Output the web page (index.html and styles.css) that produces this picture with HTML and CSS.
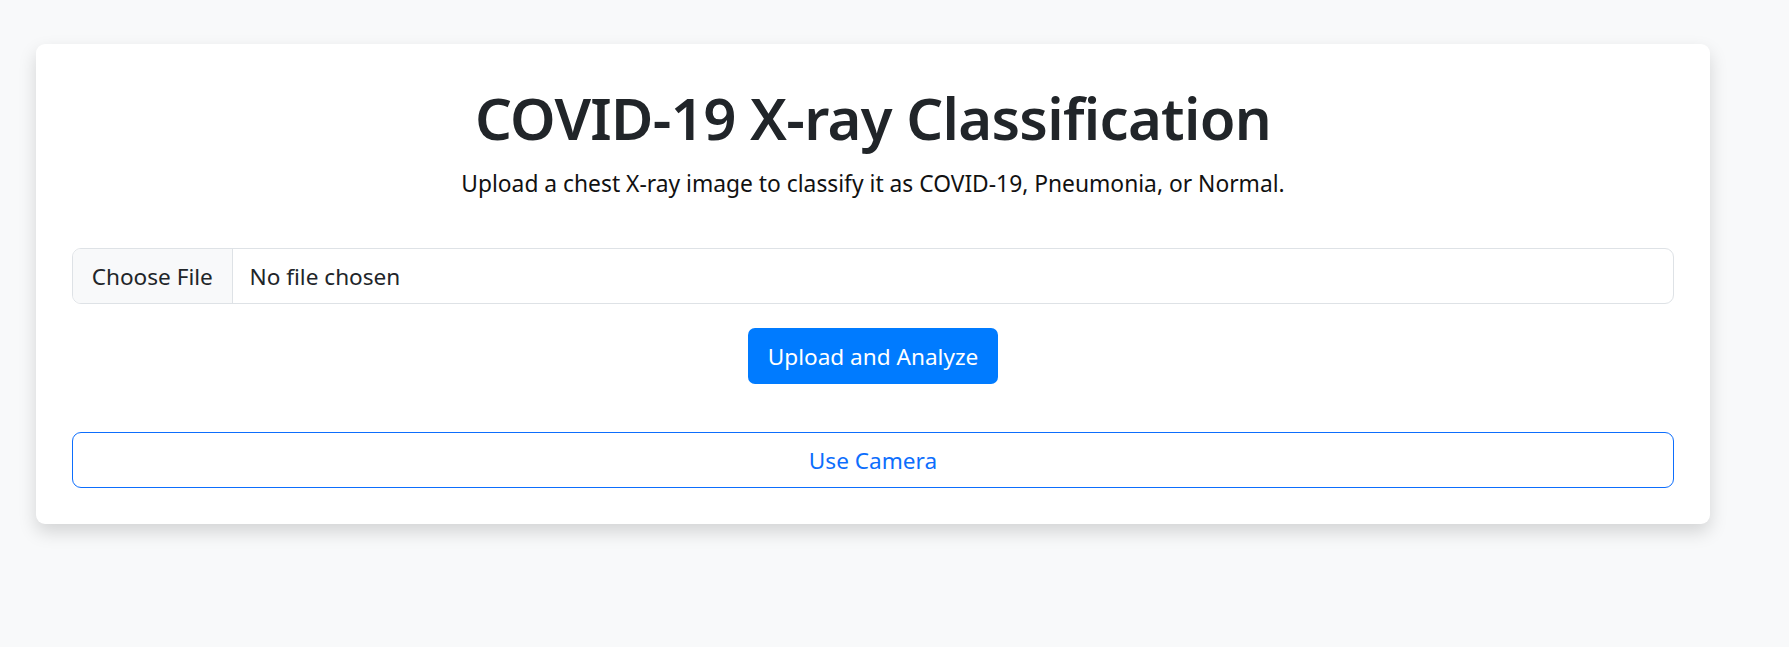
FILE: index.html
```html
<!DOCTYPE html>
<html lang="en">
<head>
<meta charset="utf-8">
<title>COVID-19 X-ray Classification</title>
<link rel="stylesheet" href="styles.css">
</head>
<body>
<div class="page">
  <div class="card">
    <h1 class="title">COVID-19 X-ray Classification</h1>
    <p class="lead">Upload a chest X-ray image to classify it as COVID-19, Pneumonia, or Normal.</p>
    <form class="upload-form">
      <label class="file-input">
        <span class="file-btn">Choose File</span>
        <span class="file-name">No file chosen</span>
      </label>
      <div class="actions">
        <button type="button" class="btn-primary">Upload and Analyze</button>
      </div>
    </form>
    <button type="button" class="btn-outline">Use Camera</button>
  </div>
</div>
</body>
</html>
```
FILE: styles.css
```css
* { box-sizing: border-box; }

html, body {
  margin: 0;
  padding: 0;
}

body {
  background: #f8f9fa;
  font-family: "Noto Sans", "Open Sans", sans-serif;
  color: #212529;
}

.page {
  padding: 44px 79px 40px 36px;
}

.card {
  background: #fff;
  border-radius: 9px;
  padding: 36px;
  box-shadow: 0 8px 18px rgba(0, 0, 0, 0.15);
}

.title {
  margin: 0;
  padding-top: 2px;
  text-align: center;
  font-size: 58px;
  line-height: 72px;
  letter-spacing: -0.7px;
  font-weight: 600;
  color: #212529;
}

.lead {
  margin: 12px 0 0;
  text-align: center;
  font-size: 22.8px;
  line-height: 35px;
  font-weight: 400;
  color: #111;
}

.upload-form {
  margin-top: 47px;
}

.file-input {
  display: flex;
  align-items: stretch;
  height: 56px;
  border: 1px solid #dee2e6;
  border-radius: 9px;
  overflow: hidden;
  font-size: 22.6px;
  color: #212529;
}

.file-btn {
  display: flex;
  align-items: center;
  padding: 0 18.7px;
  background: #f8f9fa;
  border-right: 1px solid #dee2e6;
}

.file-name {
  display: flex;
  align-items: center;
  padding: 0 17px;
}

.actions {
  display: flex;
  justify-content: center;
  margin-top: 24px;
}

.btn-primary {
  height: 56px;
  padding: 0 20px;
  border: 0;
  border-radius: 7px;
  background: #007bff;
  color: #fff;
  font-family: inherit;
  font-size: 22.6px;
}

.btn-outline {
  display: block;
  width: 100%;
  height: 56px;
  margin-top: 48px;
  border: 1px solid #0d6efd;
  border-radius: 9px;
  background: #fff;
  color: #0d6efd;
  font-family: inherit;
  font-size: 22.6px;
}
```
